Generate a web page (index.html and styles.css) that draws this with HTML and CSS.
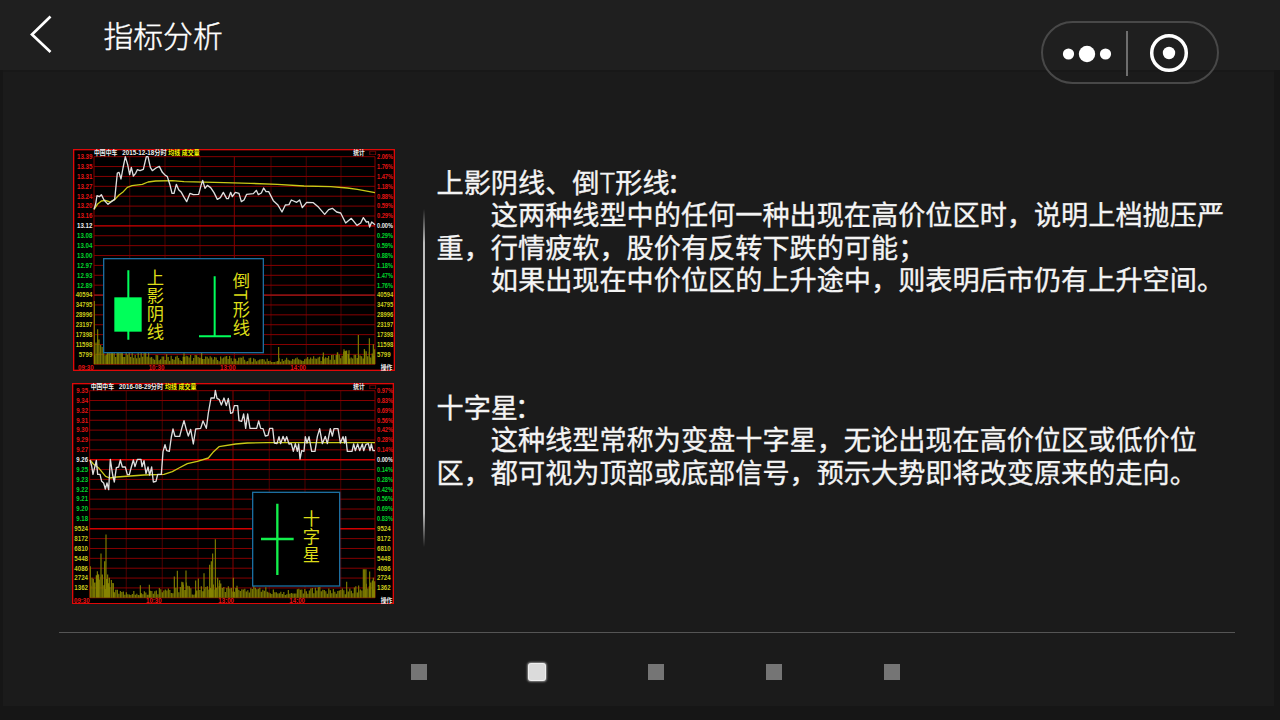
FILE: index.html
```html
<!DOCTYPE html>
<html lang="zh-CN">
<head>
<meta charset="utf-8">
<title>指标分析</title>
<link rel="stylesheet" href="styles.css">
</head>
<body>
<div class="app">
  <header class="topbar">
    <svg class="back" width="24" height="40" viewBox="0 0 24 40"><path d="M21.500 2.500 3 20.500 21.500 38"/></svg>
    <h1 class="title">指标分析</h1>
    <div class="capsule">
      <svg width="178" height="63" viewBox="0 0 178 63">
        <rect class="capsule-line" x="1" y="1" width="176" height="61" rx="30.500"/>
        <path class="capsule-sep" d="M86 10v45"/>
        <g class="white"><circle cx="27.500" cy="33" r="5.600"/><circle cx="46" cy="33" r="8.200"/><circle cx="64.500" cy="33" r="5.600"/><circle cx="128" cy="32" r="6.200"/></g>
        <circle class="ring" cx="128" cy="32" r="17.300"/>
      </svg>
    </div>
  </header>
  <main class="panel">
    <section class="content">
      <div class="charts">
        <svg class="chart" id="c1" width="322" height="222" viewBox="27 15 966 666">
          <rect class="black" x="27" y="15" width="966" height="666"/>
          <g class="plot"></g>
          <path class="avg" d="M90 196 101 180 112 171 124 169 138 174 152 167 165 153 178 143 190 130 204 125 235 121 252 114 275 111 325 110 360 113 480 116 560 118 640 121 720 126 800 128 850 132 880 136 933 146"/>
          <path class="price" d="M90 196 95 180 99 155 106 158 112 152 120 168 132 181 142 173 152 166 160 87 165 85 171 105 177 72 184 38 191 62 197 92 202 70 208 96 215 88 220 77 228 80 238 76 247 38 252 38 259 70 265 80 276 72 286 67 295 85 303 93 310 98 318 123 324 148 330 148 337 121 344 137 352 145 359 158 368 173 378 148 388 152 404 151 411 125 416 109 423 133 430 124 440 131 450 146 460 166 469 161 478 145 488 164 493 164 500 145 505 158 514 145 525 148 532 173 540 168 548 151 568 149 577 139 583 152 592 147 599 132 606 143 614 143 628 170 641 182 654 204 664 183 675 182 682 168 698 175 707 168 715 191 728 175 748 176 764 190 782 211 794 197 805 193 818 204 830 207 845 237 862 223 879 244 890 237 898 221 907 234 913 233 917 249 923 234 933 242"/>
          <rect class="box" x="119" y="344" width="479" height="282"/>
          <g class="candle"><path d="M193 379V587M452 397V577M405 577H501"/><rect x="151" y="460" width="82" height="103"/></g>
          <g class="note"><text x="274" y="375">上影阴线</text><text x="532" y="383">倒T形线</text></g>
        </svg>
        <svg class="chart" id="c2" width="322" height="221" viewBox="24 15 966 663">
          <rect class="black" x="24" y="15" width="966" height="663"/>
          <g class="plot"></g>
          <path class="avg" d="M78 246 88 258 105 271 125 295 137 300 158 297 240 291 300 289 325 281 345 270 370 257 400 250 433 240 447 223 465 206 515 198 550 195 610 194 933 194"/>
          <path class="price" d="M78 246 83 264 87 289 97 247 101 289 108 289 113 310 119 315 124 333 129 315 134 335 139 244 146 291 151 312 157 269 164 267 169 246 175 267 184 267 190 290 196 290 202 267 208 246 213 266 220 244 231 244 234 266 240 248 246 287 252 267 257 291 263 267 268 312 276 310 281 289 292 289 297 221 303 200 308 218 316 220 322 177 327 153 333 175 347 175 353 152 360 128 366 151 373 174 380 154 388 198 395 153 410 151 417 129 427 151 433 105 441 60 451 60 454 37 459 61 466 65 472 81 480 60 487 83 493 61 500 106 506 104 511 83 521 83 525 128 533 130 539 108 545 151 551 108 558 151 578 151 584 129 590 151 597 152 604 174 612 172 617 151 626 151 631 195 639 197 645 176 650 197 657 175 663 190 668 176 675 198 682 197 688 220 694 197 700 220 704 198 708 243 713 218 720 220 724 176 729 195 735 176 743 220 753 220 760 176 767 152 775 197 784 175 790 197 799 152 805 174 810 152 822 152 829 195 837 176 842 195 845 176 850 220 864 220 869 198 874 218 881 198 887 218 895 198 899 218 906 199 913 197 918 218 922 198 927 218 933 218"/>
          <rect class="box" x="566" y="343" width="261" height="281"/>
          <path class="thin-candle" d="M640 377V591M591 483H689"/>
          <g class="note"><text x="742" y="396">十字星</text></g>
        </svg>
      </div>
      <div class="divider"></div>
      <div class="copy">
        <article class="entry">
          <h2>上影阴线、倒<span class="latin">T</span>形线<span class="colon">：</span></h2>
          <p>这两种线型中的任何一种出现在高价位区时，说明上档抛压严<br>重，行情疲软，股价有反转下跌的可能；</p>
          <p>如果出现在中价位区的上升途中，则表明后市仍有上升空间。</p>
        </article>
        <article class="entry">
          <h2>十字星<span class="colon">：</span></h2>
          <p>这种线型常称为变盘十字星，无论出现在高价位区或低价位<br>区，都可视为顶部或底部信号，预示大势即将改变原来的走向。</p>
        </article>
      </div>
    </section>
    <nav class="pager"><i></i><i class="on"></i><i></i><i></i><i></i></nav>
  </main>
</div>
<script src="charts.js"></script>
</body>
</html>
```
FILE: styles.css
```css
* { box-sizing: border-box; }
body { margin: 0; background: #161616; font-family: "Noto Sans CJK SC", "Noto Sans", sans-serif; color: #fff; }
.app { width: 1280px; height: 720px; overflow: hidden; display: flex; flex-direction: column; }
.topbar { height: 70px; background: #1f1f1f; display: flex; align-items: flex-start; padding-left: 29px; }
.back { margin-top: 14px; fill: none; stroke: #fff; stroke-width: 2.7; }
.title { margin: 12px 0 0 50.500px; font-size: 29.800px; line-height: 44px; font-weight: 300; -webkit-text-stroke: 0.4px #fff; }
.capsule { margin: 21px 61px 0 auto; width: 178px; height: 63px; z-index: 1; }
.capsule svg { display: block; }
.capsule-line { fill: none; stroke: #484848; stroke-width: 2; }
.capsule-sep { stroke: #6e6e6e; stroke-width: 2; }
.white { fill: #fff; }
.ring { fill: none; stroke: #fff; stroke-width: 3.5; }
.panel { height: 636px; margin: 0 6px 0 3px; background: #1b1b1b; border-top: 2px solid #181818; padding: 77px 39px 0 56px; }
.content { height: 484px; border-bottom: 1px solid #555; display: flex; }
.charts { width: 322px; margin-left: 13px; display: flex; flex-direction: column; gap: 12px; }
.chart { display: block; }
#c1 { margin-left: 1px; }
.divider { width: 2px; height: 338px; margin: 60px 0 0 29px; background: linear-gradient(transparent, #bbb 10%, #ddd 50%, #bbb 90%, transparent); }
.copy { margin: 16px 0 0 11.500px; white-space: nowrap; }
.entry { height: 225px; font-size: 27.170px; line-height: 32.300px; font-weight: 400; -webkit-text-stroke: 0.35px #f4f4f4; color: #f4f4f4; }
.entry h2 { margin: 0; font: inherit; }
.entry p { margin: 0; text-indent: 2em; }
.latin { font-weight: 300; }
.colon { margin-left: -3px; }
.pager { display: flex; gap: 102.300px; margin: 31px 0 0 352px; align-items: center; }
.pager i { width: 16px; height: 16px; background: #757575; }
.pager .on { border-radius: 2px; background: #dbdbdb; box-shadow: 0 0 0 1px #eee, 0 0 2px 2px #888; }
.black { fill: #000; }
.frame { fill: none; stroke: #df0808; stroke-width: 4; }
.grid { stroke: #850000; stroke-width: 3; fill: none; }
.grid.faint { stroke: #3a0000; stroke-width: 4; }
.grid.strong { stroke: #d40000; stroke-width: 4; }
.grid.dim { stroke: #8c1010; stroke-width: 5; }
.vol { stroke: #858300; stroke-width: 3.3; fill: none; }
.avg { fill: none; stroke: #c9c916; stroke-width: 4; stroke-linejoin: round; }
.price { fill: none; stroke: #dedede; stroke-width: 4; stroke-linejoin: round; }
.box { fill: #000; stroke: #1c6e9f; stroke-width: 4; }
.candle { fill: #00ff5a; stroke: #00ff5a; stroke-width: 6; }
.candle rect { stroke: none; }
.thin-candle { stroke: #13f04c; stroke-width: 7; }
.note { fill: #dcdc18; font-size: 52px; font-weight: 400; writing-mode: vertical-rl; letter-spacing: 2px; }
.lab { font-family: "Liberation Sans", "Noto Sans CJK SC", sans-serif; font-size: 19px; font-weight: 700; }
.red { fill: #e41414; }
.green { fill: #00d42c; }
.yellow { fill: #c8c81c; }
.pale { fill: #eee; }
.bright { fill: #f4f400; }
```
FILE: charts.js
```javascript
function el(parent, tag, attrs, text) {
  const n = document.createElementNS("http://www.w3.org/2000/svg", tag);
  for (const k in attrs) n.setAttribute(k, attrs[k]);
  if (text) n.textContent = text;
  parent.appendChild(n);
}

function label(g, x, y, w, cls, text) {
  el(g, "text", { x, y, textLength: w, lengthAdjust: "spacingAndGlyphs", class: "lab " + cls }, text);
}

function draw(id, c) {
  const g = document.querySelector("#" + id + " .plot");
  const row = k => c.top + k * c.step;
  const base = row(21);
  c.cols.forEach((x, i) => el(g, "path", { class: "grid" + (i % 8 === 0 || i === 4 ? "" : " faint"), d: `M${x} ${c.top}V${base}` }));
  for (let k = 0; k < 22; k++) {
    el(g, "path", { class: "grid" + (k === 7 ? " strong" : k === 14 ? c.mid : ""), d: `M${c.cols[0]} ${row(k)}H933` });
  }
  // Volume bars: an envelope with a repeatable variation, then single peaks
  let seed = c.seed, d = "";
  for (let x = c.cols[0] + 2; x < 933; x += 4.5) {
    seed = (seed * 16807) % 2147483647;
    const r = seed / 2147483647;
    let i = 0;
    while (i < c.env.length - 2 && c.env[i + 1][0] < x) i++;
    const [a, ha] = c.env[i], [b, hb] = c.env[i + 1];
    const h = (ha + (hb - ha) * (x - a) / (b - a)) * (0.35 + 0.65 * r);
    d += `M${x.toFixed(1)} ${base}v-${h.toFixed(1)}`;
  }
  c.peaks.forEach(([x, h]) => { d += `M${x} ${base}v-${h}`; });
  el(g, "path", { class: "vol", d });
  c.left.forEach((t, k) => {
    const cls = k > 13 ? "yellow" : k > 7 ? "green" : k === 7 ? "pale" : "red";
    const w = k > 13 ? (t.length > 4 ? 50 : 41) : c.lw;
    label(g, c.cols[0] - 5 - w, row(k) + 7, w, cls, t);
    label(g, 939, row(k) + 7, k > 13 ? (t.length > 4 ? 49 : 41) : 48, cls, k > 13 ? t : c.right[k] + "%");
  });
  el(g, "rect", { class: "frame", x: c.x0, y: 17, width: 966 - 4, height: c.bottom - 17 });
  c.times.forEach(([x, t]) => label(g, x, c.bottom - 2, 47, "red", t));
  label(g, 950, c.bottom - 2, 35, "pale", "操作");
  label(g, c.hx, 32, 70, "pale", "中国中车");
  label(g, c.hx + 85, 32, 133, "pale", c.date + "分时");
  label(g, c.hx + 223, 32, 94, "bright", "均线 成交量");
  label(g, 868, 32, 34, "pale", "统计");
  label(g, 916, 32, 19, "red", "□");
}

draw("c1", {
  top: 38, step: 29.66, mid: " dim", cols: [90, 197, 303, 408, 511, 621, 727, 831, 933], seed: 77, x0: 29, bottom: 679, lw: 46,
  left: ["13.39","13.35","13.31","13.27","13.24","13.20","13.16","13.12","13.08","13.04","13.00","12.97","12.93","12.89","40594","34795","28996","23197","17398","11598","5799"],
  right: ["2.06","1.76","1.47","1.18","0.88","0.59","0.29","0.00","0.29","0.59","0.88","1.18","1.47","1.76"],
  env: [[90,80],[120,52],[230,48],[300,30],[510,25],[620,18],[740,25],[800,30],[840,42],[933,45]],
  peaks: [[91,190],[96,65],[101,105],[105,74],[110,58],[130,36],[145,36],[160,36],[175,36],[360,33],[413,34],[644,52],[778,35],[820,35],[840,45],[846,39],[855,42],[883,88],[901,46],[916,78],[928,60],[932,45]],
  times: [[42,"09:30"],[254,"10:30"],[468,"13:00"],[679,"14:00"]], hx: 90, date: "2015-12-18"
});
draw("c2", {
  top: 38, step: 29.59, mid: " strong", cols: [77, 187, 295, 402, 507, 616, 723, 830, 933], seed: 991, x0: 26, bottom: 677, lw: 35,
  left: ["9.35","9.34","9.32","9.31","9.30","9.29","9.27","9.26","9.25","9.23","9.22","9.21","9.20","9.18","9524","8172","6810","5448","4086","2724","1362"],
  right: ["0.97","0.83","0.69","0.56","0.42","0.28","0.14","0.00","0.14","0.28","0.42","0.56","0.69","0.83"],
  env: [[77,60],[110,75],[135,65],[160,25],[240,20],[330,40],[370,55],[385,20],[440,50],[480,45],[510,30],[600,38],[640,20],[760,34],[830,28],[880,38],[933,60]],
  peaks: [[79,95],[84,60],[92,45],[100,80],[104,70],[111,133],[115,70],[122,110],[126,190],[131,70],[136,60],[148,44],[229,38],[256,39],[331,64],[340,81],[357,47],[366,82],[395,52],[403,58],[420,74],[437,99],[442,110],[446,133],[454,176],[461,60],[467,53],[508,60],[519,36],[848,48],[884,37],[898,86],[902,86],[906,86],[917,79],[928,60],[932,50]],
  times: [[30,"09:30"],[246,"10:30"],[463,"13:00"],[676,"14:00"]], hx: 80, date: "2016-08-29"
});
```
